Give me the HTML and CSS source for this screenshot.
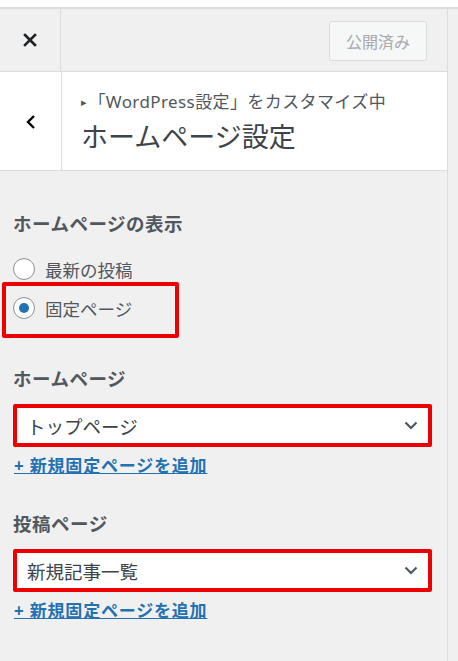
FILE: index.html
```html
<!DOCTYPE html>
<html>
	<head>
		<meta http-equiv="Content-Type" content="text/html; charset=UTF-8" />
		<title>ホームページ設定</title>
		<link rel="stylesheet" href="styles.css">
	</head>

	<body>
		<div class="topstrip"></div>

		<div class="layout">
			<div class="panel">
				<div class="header">
					<div class="close">
						<svg width="14" height="14" viewBox="0 0 14 14">
							<path d="M2 2 L12 12 M12 2 L2 12" stroke="#1d2327" stroke-width="2.6" stroke-linecap="square" />
						</svg>
					</div>
					<div class="header-actions">
						<button class="publish" disabled>公開済み</button>
					</div>
				</div>

				<div class="section-head">
					<div class="back">
						<svg width="12" height="16" viewBox="0 0 12 16">
							<path d="M9 2 L3 8 L9 14" fill="none" stroke="#000" stroke-width="2.4" />
						</svg>
					</div>
					<div class="titles">
						<div class="crumb"><span class="tri">&#9656;</span>「WordPress設定」をカスタマイズ中</div>
						<div class="title">ホームページ設定</div>
					</div>
				</div>

				<div class="content">
					<h3 class="label first">ホームページの表示</h3>
					<div class="radio-row">
						<span class="radio"></span>
						<span>最新の投稿</span>
					</div>
					<div class="mark mark-radio">
						<div class="radio-row">
							<span class="radio checked"></span>
							<span>固定ページ</span>
						</div>
					</div>

					<h3 class="label">ホームページ</h3>
					<div class="mark select">
						<span>トップページ</span>
						<svg width="14" height="9" viewBox="0 0 14 9">
							<path d="M1.5 1.5 L7 7 L12.5 1.5" fill="none" stroke="#50575e" stroke-width="2.2" />
						</svg>
					</div>
					<a class="add" href="#">+ 新規固定ページを追加</a>

					<h3 class="label">投稿ページ</h3>
					<div class="mark select">
						<span>新規記事一覧</span>
						<svg width="14" height="9" viewBox="0 0 14 9">
							<path d="M1.5 1.5 L7 7 L12.5 1.5" fill="none" stroke="#50575e" stroke-width="2.2" />
						</svg>
					</div>
					<a class="add" href="#">+ 新規固定ページを追加</a>
				</div>
			</div>
			<div class="preview"></div>
		</div>
	</body>
</html>
```

FILE: styles.css
```css
html, body {
	margin: 0;
	height: 100%;
}
body {
	background-color: #f0f0f1;
	color: #50575e;
	font-family: "Noto Sans", "Noto Sans CJK JP", sans-serif;
	overflow: hidden;
}
.topstrip {
	background-color: #fff;
	border-bottom: 2px solid #dcdcde;
	height: 7px;
}
.layout {
	display: flex;
	height: calc(100% - 9px);
}
.panel {
	border-right: 1px solid #dcdcde;
	width: 447px;
}
.preview {
	flex: 1;
}
.header {
	border-bottom: 1px solid #dcdcde;
	display: flex;
	height: 62px;
}
.close {
	align-items: center;
	border-right: 1px solid #dcdcde;
	display: flex;
	justify-content: center;
	width: 60px;
}
.header-actions {
	align-items: center;
	display: flex;
	flex: 1;
	justify-content: flex-end;
	padding-right: 20px;
}
.publish {
	background-color: #f6f7f7;
	border: 1px solid #dcdcde;
	border-radius: 3px;
	color: #a7aaad;
	font-family: inherit;
	font-size: 16px;
	height: 40px;
	margin-top: 2px;
	width: 98px;
}
.section-head {
	background-color: #fff;
	border-bottom: 1px solid #dcdcde;
	display: flex;
	height: 98px;
}
.back {
	align-items: center;
	border-right: 1px solid #dcdcde;
	display: flex;
	justify-content: center;
	padding-top: 2px;
	width: 61px;
}
.titles {
	padding: 19px 0 0 19px;
}
.crumb {
	color: #50575e;
	font-size: 17px;
	letter-spacing: 0.4px;
	line-height: 22px;
	white-space: nowrap;
}
.tri {
	font-size: 11px;
	margin-right: 1px;
	vertical-align: 2px;
}
.title {
	color: #3c434a;
	font-size: 27px;
	line-height: 34px;
	margin-top: 7px;
}
.content {
	padding: 0 13px;
}
.label {
	color: #50575e;
	font-size: 18.5px;
	font-weight: bold;
	letter-spacing: 0.5px;
	line-height: 24px;
	margin: 29px 0 13px;
}
.label.first {
	margin: 41px 0 20px 0;
}
.radio-row {
	align-items: center;
	color: #50575e;
	display: flex;
	font-size: 17.5px;
	gap: 10px;
	height: 26px;
}
.radio {
	align-items: center;
	background-color: #fff;
	border: 1px solid #8c8f94;
	border-radius: 50%;
	box-sizing: border-box;
	display: inline-flex;
	height: 22px;
	justify-content: center;
	width: 22px;
}
.radio.checked::after {
	background-color: #2271b1;
	border-radius: 50%;
	content: "";
	height: 10px;
	width: 10px;
}
.mark {
	border: 4px solid #ec0000;
	border-radius: 2px;
	box-sizing: border-box;
}
.mark-radio {
	height: 56px;
	margin-left: -11px;
	padding: 9px 0 0 7px;
	width: 177px;
}
.select {
	align-items: center;
	background-color: #fff;
	color: #3c434a;
	display: flex;
	font-size: 18.5px;
	height: 43px;
	justify-content: space-between;
	padding: 0 10px 0 10px;
	width: 419px;
}
.add {
	color: #2271b1;
	display: inline-block;
	font-size: 17px;
	font-weight: bold;
	letter-spacing: 0.8px;
	line-height: 22px;
	margin: 8px 0 6px;
	padding-left: 1px;
}
```
